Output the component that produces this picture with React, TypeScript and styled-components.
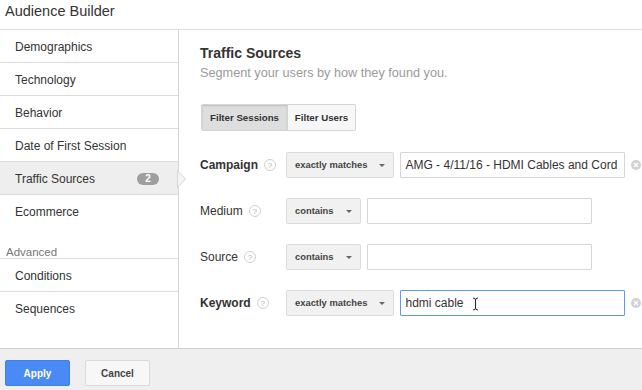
import * as React from 'react'
import styled, { createGlobalStyle } from 'styled-components'

const SIDENAV_WIDTH = 179

const GlobalStyle = createGlobalStyle`
    html, body {
        margin: 0;
        padding: 0;
        background: #fff;
    }
    body {
        font-family: "Liberation Sans", Arial, sans-serif;
        color: #333;
    }
`

const Frame = styled.div`
    width: 642px;
    height: 390px;
    display: flex;
    flex-direction: column;
    overflow: hidden;
    background: #fff;
`

const TitleBar = styled.div`
    box-sizing: border-box;
    height: 30px;
    padding: 3px 0 0 5px;
    border-bottom: 1px solid #dcdcdc;
    font-size: 14.5px;
    line-height: 17px;
    color: #333;
`

const Body = styled.div`
    flex: 1;
    display: flex;
    min-height: 0;
`

const SideNav = styled.div`
    box-sizing: border-box;
    width: ${SIDENAV_WIDTH}px;
    flex-shrink: 0;
    border-right: 1px solid #d6d6d6;
    display: flex;
    flex-direction: column;
`

const NavItem = styled.div<{ $active?: boolean; $last?: boolean }>`
    position: relative;
    box-sizing: border-box;
    height: ${p => (p.$last ? 32 : 33)}px;
    display: flex;
    align-items: center;
    justify-content: space-between;
    padding: 1px 19px 0 15px;
    font-size: 12px;
    color: #333;
    background: ${p => (p.$active ? '#eeeeee' : 'transparent')};
    border-bottom: ${p => (p.$last ? 'none' : '1px solid #dcdcdc')};
`

const Badge = styled.span`
    display: inline-flex;
    align-items: center;
    justify-content: center;
    width: 22px;
    height: 12px;
    border-radius: 6px;
    background: #9e9e9e;
    color: #fff;
    font-size: 10px;
    font-weight: bold;
`

const Pointer = styled.svg`
    position: absolute;
    right: -9px;
    top: 8px;
`

const SectionLabel = styled.div`
    box-sizing: border-box;
    height: 32px;
    display: flex;
    align-items: flex-end;
    padding: 0 0 0 6px;
    font-size: 11.5px;
    color: #777;
    border-bottom: 1px solid #dcdcdc;
`

const Content = styled.div`
    flex: 1;
    padding: 15px 0 0 21px;
`

const Heading = styled.div`
    font-size: 14px;
    font-weight: bold;
    line-height: 16px;
    color: #333;
`

const SubHeading = styled.div`
    margin-top: 4px;
    font-size: 12.7px;
    line-height: 16px;
    color: #9a9a9a;
`

const Toggle = styled.div`
    margin: 23px 0 0 1px;
    display: inline-flex;
    height: 27px;
    border: 1px solid #d4d4d4;
    border-radius: 2px;
    box-sizing: border-box;
    overflow: hidden;
`

const ToggleButton = styled.div<{ $active?: boolean; $width: number }>`
    width: ${p => p.$width}px;
    display: flex;
    align-items: center;
    justify-content: center;
    white-space: nowrap;
    font-size: 9.7px;
    font-weight: bold;
    color: #333;
    background: ${p => (p.$active ? '#dedede' : '#f7f7f7')};
    box-shadow: ${p => (p.$active ? 'inset 0 1px 2px rgba(0,0,0,0.15)' : 'none')};
    & + & {
        border-left: 1px solid #d4d4d4;
    }
`

const FilterList = styled.div`
    margin-top: 21px;
    display: flex;
    flex-direction: column;
    gap: 20px;
`

const FilterRow = styled.div`
    display: flex;
    align-items: center;
    height: 26px;
`

const Label = styled.div<{ $strong?: boolean }>`
    width: 86px;
    flex-shrink: 0;
    display: flex;
    align-items: center;
    gap: 6px;
    font-size: 12px;
    font-weight: ${p => (p.$strong ? 'bold' : 'normal')};
    color: #333;
`

const Help = styled.span`
    box-sizing: border-box;
    width: 12px;
    height: 12px;
    border-radius: 50%;
    border: 1px solid #d0d0d0;
    display: inline-flex;
    align-items: center;
    justify-content: center;
    font-size: 8px;
    font-weight: normal;
    color: #b0b0b0;
`

const Select = styled.div`
    box-sizing: border-box;
    flex-shrink: 0;
    height: 26px;
    display: flex;
    align-items: center;
    gap: 12px;
    padding: 0 8px 2px 8px;
    border: 1px solid #dcdcdc;
    border-radius: 2px;
    background: #f1f1f1;
    white-space: nowrap;
    font-size: 9.4px;
    font-weight: bold;
    color: #444;
`

const Caret = styled.span`
    width: 0;
    height: 0;
    margin-top: 3px;
    border-left: 3px solid transparent;
    border-right: 3px solid transparent;
    border-top: 3px solid #666;
`

const InputWrap = styled.div`
    position: relative;
    flex-shrink: 0;
    margin-left: 6px;
    display: flex;
    align-items: center;
`

const Input = styled.input<{ $focused?: boolean }>`
    box-sizing: border-box;
    width: 225px;
    height: 26px;
    margin: 0;
    padding: 0 0 0 4px;
    border: 1px solid ${p => (p.$focused ? '#5b9af5' : '#d6d6d6')};
    border-radius: 1px;
    outline: none;
    font-family: "Liberation Sans", Arial, sans-serif;
    font-size: 12px;
    color: #333;
    background: #fff;
`

const Clear = styled.span`
    margin-left: 6px;
    width: 10px;
    height: 10px;
    flex-shrink: 0;
    border-radius: 50%;
    background: #d2d2d2;
    display: inline-flex;
    align-items: center;
    justify-content: center;
`

const Cursor = styled.svg`
    position: absolute;
    left: 72px;
    top: 7px;
`

const Footer = styled.div`
    box-sizing: border-box;
    height: 42px;
    display: flex;
    gap: 15px;
    padding: 11px 0 0 5px;
    border-top: 1px solid #cfcfcf;
    background: #efefef;
`

const Button = styled.div<{ $primary?: boolean }>`
    box-sizing: border-box;
    width: 65px;
    height: 26px;
    display: flex;
    align-items: center;
    justify-content: center;
    border-radius: 2px;
    font-size: 10px;
    font-weight: bold;
    color: ${p => (p.$primary ? '#fff' : '#444')};
    background: ${p => (p.$primary ? '#4a8af5' : '#f7f7f7')};
    border: 1px solid ${p => (p.$primary ? '#3f7fe8' : '#dadada')};
`

const ClearIcon = () => (
    <Clear>
        <svg width="6" height="6" viewBox="0 0 6 6">
            <path d="M1 1 L5 5 M5 1 L1 5" stroke="#fff" strokeWidth="1.3" />
        </svg>
    </Clear>
)

interface IFilter {
    label: string
    strong?: boolean
    op: string
    value: string
    focused?: boolean
    clearable?: boolean
}

const filters: IFilter[] = [
    { label: 'Campaign', strong: true, op: 'exactly matches', value: 'AMG - 4/11/16 - HDMI Cables and Cord', clearable: true },
    { label: 'Medium', op: 'contains', value: '' },
    { label: 'Source', op: 'contains', value: '' },
    { label: 'Keyword', strong: true, op: 'exactly matches', value: 'hdmi cable', focused: true, clearable: true },
]

const navTop = ['Demographics', 'Technology', 'Behavior', 'Date of First Session']

export default function App() {
    return (
        <Frame>
            <GlobalStyle />
            <TitleBar>Audience Builder</TitleBar>
            <Body>
                <SideNav>
                    {navTop.map(n => <NavItem key={n}>{n}</NavItem>)}
                    <NavItem $active>
                        Traffic Sources
                        <Badge>2</Badge>
                        <Pointer width="10" height="18" viewBox="0 0 10 18">
                            <path d="M0.5 0.5 L8.5 9 L0.5 17.5 Z" fill="#f4f4f4" stroke="#d6d6d6" />
                        </Pointer>
                    </NavItem>
                    <NavItem $last>Ecommerce</NavItem>
                    <SectionLabel>Advanced</SectionLabel>
                    <NavItem>Conditions</NavItem>
                    <NavItem $last>Sequences</NavItem>
                </SideNav>
                <Content>
                    <Heading>Traffic Sources</Heading>
                    <SubHeading>Segment your users by how they found you.</SubHeading>
                    <Toggle>
                        <ToggleButton $active $width={85}>Filter Sessions</ToggleButton>
                        <ToggleButton $width={67}>Filter Users</ToggleButton>
                    </Toggle>
                    <FilterList>
                        {filters.map(f => (
                            <FilterRow key={f.label}>
                                <Label $strong={f.strong}>
                                    {f.label}
                                    <Help>?</Help>
                                </Label>
                                <Select>
                                    {f.op}
                                    <Caret />
                                </Select>
                                <InputWrap>
                                    <Input $focused={f.focused} defaultValue={f.value} readOnly />
                                    {f.focused && (
                                        <Cursor width="7" height="14" viewBox="0 0 7 14">
                                            <path d="M1 1 Q3.5 1 3.5 3 L3.5 11 Q3.5 13 1 13 M6 1 Q3.5 1 3.5 3 M3.5 11 Q3.5 13 6 13" fill="none" stroke="#222" strokeWidth="1" />
                                        </Cursor>
                                    )}
                                </InputWrap>
                                {f.clearable && <ClearIcon />}
                            </FilterRow>
                        ))}
                    </FilterList>
                </Content>
            </Body>
            <Footer>
                <Button $primary>Apply</Button>
                <Button>Cancel</Button>
            </Footer>
        </Frame>
    )
}
